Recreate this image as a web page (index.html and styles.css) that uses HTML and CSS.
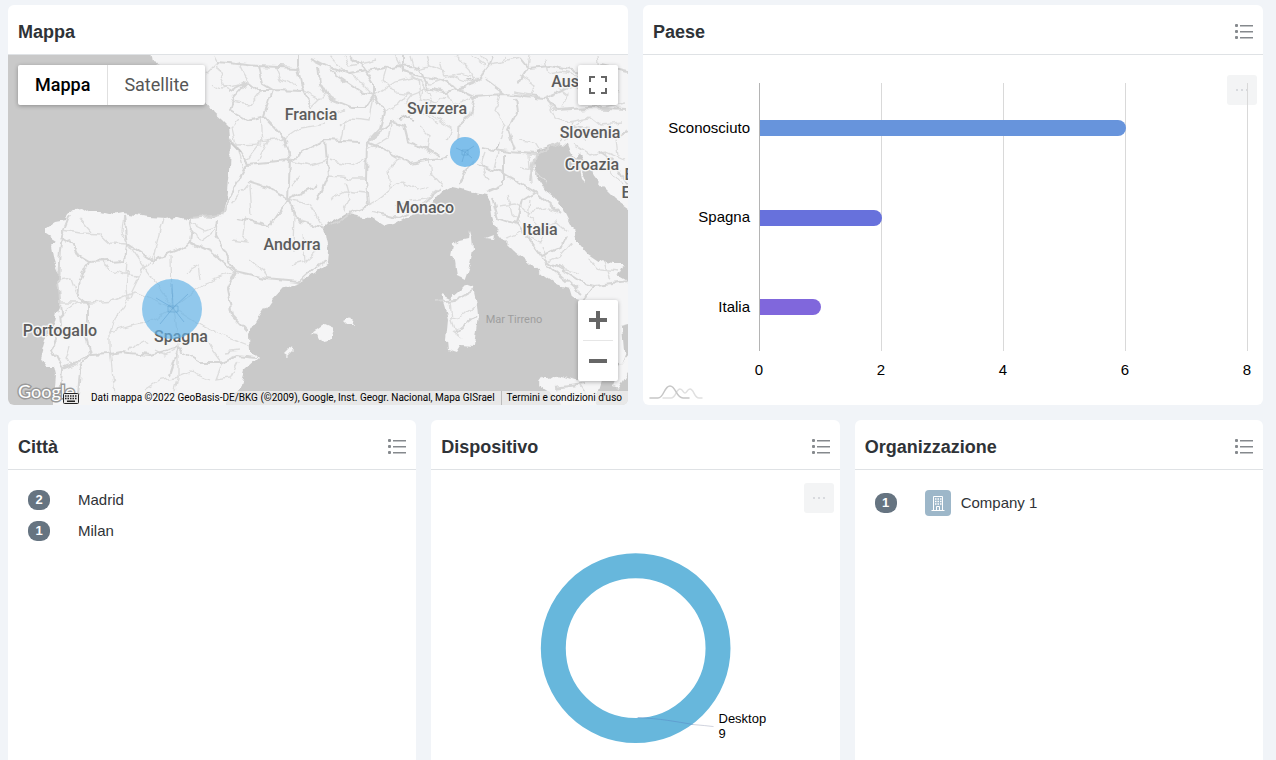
FILE: index.html
```html
<!DOCTYPE html>
<html lang="it">
<head>
    <meta charset="UTF-8">
    <meta name="viewport" content="width=device-width, initial-scale=1.0">
    <title>Dashboard</title>
    <link rel="stylesheet" href="styles.css">
</head>
<body>
    <svg class="sprite" aria-hidden="true">
        <symbol id="icon-list" viewBox="0 0 18 16">
            <g fill="#85898d">
                <rect x="0" y="0" width="3" height="3" rx="1"/>
                <rect x="0" y="6" width="3" height="3" rx="1"/>
                <rect x="0" y="12" width="3" height="3" rx="1"/>
                <rect x="5" y="1" width="13" height="1.500"/>
                <rect x="5" y="7" width="13" height="1.500"/>
                <rect x="5" y="13" width="13" height="1.500"/>
            </g>
        </symbol>
    </svg>

    <main class="dashboard">
        <div class="row row-top">
            <section class="card">
                <header class="card-header">
                    <h2>Mappa</h2>
                </header>
                <div class="card-body map">
                    <svg class="map-canvas" viewBox="8 55 620 350" preserveAspectRatio="xMidYMid slice">
                        <defs>
                            <filter id="rough" x="0" y="0" width="100%" height="100%">
                                <feTurbulence type="fractalNoise" baseFrequency="0.09" numOctaves="2" seed="4" result="noise"/>
                                <feDisplacementMap in="SourceGraphic" in2="noise" scale="8" xChannelSelector="R" yChannelSelector="G"/>
                            </filter>
                        </defs>
                        <rect x="0" y="40" width="650" height="380" fill="#c9c9c9"/>
                        <g filter="url(#rough)">
                            <!-- mainland -->
                            <path fill="#f5f5f6" d="M148 40H645V320L622 326 624 350 628 356 620 366 614 350 600 320 586 302 573 298 570 288 555 284 545 277 530 263 515 251 505 241 496 230 492 215 490 200 485 195 475 193 462 189 452 187 443 192 435 200 425 210 408 216 395 224 385 226 372 218 358 216 345 213 330 222 324 228 326 240 329 252 328 263 315 273 300 282 283 288 272 300 258 320 249 335 250 350 258 358 245 370 240 388 226 405V420H54L54 395 56 375 54 366 46 366 47 362 40 358 45 340 54 325 60 300 58 272 54 262 51 246 55 240 46 234 46 228 55 222 66 220 68 213 75 208 82 207 90 212 100 212 112 215 122 213 135 215 150 217 165 218 175 216 188 220 205 218 215 219 222 215 226 200 229 170 230 138 229 127 222 120 213 112 206 101 190 80 164 67 152 63Z"/>
                            <!-- Adriatic -->
                            <path fill="#c9c9c9" d="M535 150 545 147 558 143 568 144 571 152 575 160 580 153 586 166 592 174 602 187 614 199 645 222V292L618 276 624 264 612 264 600 262 588 254 577 241 572 228 563 210 555 198 545 190 537 177 534 163Z"/>
                            <path fill="#c9c9c9" d="M645 325 630 345 622 366 616 385 612 395 645 400Z"/>
                            <!-- islands -->
                            <g fill="#f5f5f6">
                                <path d="M470 230 472 237 473 250 470 265 465 279 457 275 455 262 451 255 453 245 460 240 469 238Z"/>
                                <path d="M442 295 450 299 458 292 465 285 473 288 477 305 478 315 476 330 474 346 462 345 457 353 448 350 447 340 449 320 446 308Z"/>
                                <path d="M311 334 325 324 334 328 331 340 322 342 318 335Z"/>
                                <path d="M343 321 349 318 354 325 347 325Z"/>
                                <path d="M284 354 289 349 293 350 287 356Z"/>
                                <path d="M486 238 494 235 493 239Z"/>
                                <path d="M540 383 545 376 550 380 558 375 574 380 602 381 598 394 592 420H568L555 396 542 388Z"/>
                                <path d="M620 366 630 354 628 372 618 388 612 386Z"/>
                                <path d="M598 178 612 190 622 196 618 198 604 188Z"/>
                                <path d="M580 165 584 174 587 182 583 178Z"/>
                            </g>
                            <!-- minor roads -->
                            <g fill="none" stroke="#dcdcdc" stroke-width="1.3">
                                <path d="M62 230 80 233 100 234 110 243 128 244M80 218 92 232M129 245 122 232 124 215M129 245 150 275 173 308 205 282 235 271M163 218 155 250 152 264M155 250 140 275 128 300 115 320 110 332 130 326 150 322 173 308M172 255 173 308 178 345 178 380 172 400M100 262 110 270 125 275 140 276M60 302 90 302 115 300 135 292 155 300 173 308 200 325 222 335 248 345M128 262 126 290 128 302"/>
                                <path d="M58 280 72 278 78 295M60 315 74 305 84 300M110 332 110 350 115 395M145 390 160 380 175 378 190 372 210 380M175 350 165 355 155 350M130 350 140 340 150 345M70 345 66 360 78 365 88 355M200 280 198 265 186 272M222 362 215 380 230 378 238 362M205 335 213 350 222 362M240 350 225 352M189 222 205 230 216 226M190 232 202 240 212 233 218 222M245 217 243 235 248 242 230 240M293 265 305 262 318 250M250 260 262 270 268 278M304 235 306 262M294 210 293 250"/>
                                <path d="M205 75 218 62 222 80 228 92M218 62 215 56M262 90 250 105 232 102M240 120 232 128 236 145 262 144 260 116M285 138 260 142 245 162M236 145 243 170M268 140 258 160M250 185 252 215M291 160 310 165 328 160M303 91 320 100M298 60 298 68M285 138 300 128 325 124M288 200 310 205 324 228M248 185 232 205M300 175 292 185M312 108 325 95M240 85 222 88 212 84"/>
                                <path d="M330 56 340 68 356 78M345 56 350 66 378 60M395 56 402 70 418 80 420 95M356 78 374 96 395 82 412 78 430 84 452 76 474 84M374 96 370 120 352 118 338 128M382 112 398 104 408 92M418 80 432 95 428 112 440 120 452 128 448 140M440 62 444 76 462 74 480 80M456 56 470 70 476 84M402 120 420 110 438 122M420 126 430 136 428 152M330 160 352 165 366 158M328 176 352 178 365 178M392 120 388 138 367 150M400 158 388 170 390 190 378 200 367 206M390 190 402 182 418 190 430 186"/>
                                <path d="M395 208 410 200 428 198 440 188M430 160 432 175 442 186M480 56 488 64 502 62 520 58M502 62 506 56M545 60 548 74 562 72 580 76M520 75 535 85 530 95 512 92M560 108 568 96 558 88 562 78M500 95 495 110 505 124 500 140M520 140 535 142 540 150M550 105 556 118 568 122 590 118M560 130 575 126 590 116 600 124 622 122M575 145 590 155 606 152 624 160M606 152 610 172 622 184M585 140 578 128M486 154 482 165 488 180M498 152 494 168M530 155 532 182M520 168 535 170 548 185M498 206 515 204 530 212 545 208 558 212M508 196 512 215 520 222"/>
                                <path d="M505 238 520 232 540 242 545 232M530 200 528 215 540 226 556 222 568 232M548 262 560 256 572 242M542 245 548 262 560 268 580 272M588 258 600 270 618 272M604 262 610 280M612 70 606 84 620 92M598 56 600 70M590 100 602 108 626 104M450 300 452 320 456 332M452 318 465 314 476 304M452 330 462 338M580 386 590 400M628 130 616 140 618 156"/>
                                <path d="M410 56 414 70 430 66 446 72M426 56 430 66M424 88 420 100 436 104 446 96M446 92 452 104 466 100 474 96M384 80 396 92 412 94 428 88M388 66 384 80M404 104 412 94M470 56 484 66M530 56 528 68M340 142 344 126M345 182 350 200 344 212M330 200 345 192 366 194M238 62 244 74 250 82M275 68 280 80 294 86M320 110 330 116 345 110"/>
                            </g>
                            <!-- motorways -->
                            <g fill="none" stroke="#d6d6d6" stroke-width="2" stroke-linejoin="round">
                                <path d="M70 214 62 234 60 250 58 280 60 300 62 325 52 350 62 370 60 395M60 236 72 244 78 256 88 262 126 260 128 244 124 215M128 244 152 260 178 250 190 242 192 228 190 219 222 216M190 242 212 252 235 271 265 278 300 281 312 270 326 262M218 220 216 236 235 271 227 290 232 315 248 332M88 262 80 280 78 296 88 304 88 320 86 336 90 354 80 370 78 395M90 355 110 354 120 352 150 355 176 348 200 362 222 362 236 356 256 358"/>
                                <path d="M62 368 78 362 90 355M178 350 170 375M222 216 228 200 243 172 248 164 290 160 288 200 270 226 256 222 238 218M248 164 240 152 230 140M248 182 268 188 288 200 300 222 326 228M288 200 318 185M291 160 285 138 264 116 272 90 303 91M285 138 264 116 248 120 230 110 234 98 248 82 228 92M218 62 258 66 262 84 272 90M248 82 258 90 272 90M258 66 298 68 303 91 312 108M298 66 298 56M291 160 310 148 325 140 360 142"/>
                                <path d="M310 58 326 66 350 74 372 70 398 66 420 68M318 66 320 84 328 98 352 108 366 108 374 96M350 56 364 68 374 84 374 96 384 112 380 128 367 142 366 180 368 205 350 213 330 226M325 140 328 176 318 200M374 96 362 92 330 70M367 142 392 122 404 126 408 142 424 148 438 156M367 142 390 152 410 164 432 160 448 158M372 212 398 218 420 206 440 190"/>
                                <path d="M402 56 402 72 420 76 440 80 456 88 474 96 505 94 545 98 572 86 600 96M420 68 428 88 445 92 474 84 488 66 492 56M474 96 470 115 460 124 458 140M505 94 484 78M480 148 508 152 536 154 560 142M515 150 508 130 516 112 514 98M478 164 505 174 535 192 560 214M474 160 466 172 458 184M504 154 504 184 486 192M535 154 530 180"/>
                                <path d="M492 196 498 218 516 224 530 240 542 256 560 248 566 236M542 258 566 272 584 284 596 286 628 282M516 224 522 200 535 192M545 262 566 280 582 294M596 286 584 300M520 58 528 68 550 66 580 72 602 66 628 72M528 68 518 84M545 98 556 110 590 108 626 110M572 122 560 140M566 140 572 128 590 130 612 140 628 132M598 150 612 160 628 186M436 302 456 300 474 290M455 332 475 316M555 388 585 384"/>
                            </g>
                            <!-- lakes -->
                            <g fill="none" stroke="#cbcbcb" stroke-width="1.6">
                                <path d="M400 120 408 117 414 119M466 79 474 82M496 150 499 143M228 140 240 152"/>
                            </g>
                        </g>
                        <g class="map-label">
                            <text x="311" y="120">Francia</text>
                            <text x="437" y="114">Svizzera</text>
                            <text x="577" y="87">Austria</text>
                            <text x="590" y="138">Slovenia</text>
                            <text x="592" y="170">Croazia</text>
                            <text x="425" y="213">Monaco</text>
                            <text x="540" y="235">Italia</text>
                            <text x="292" y="250">Andorra</text>
                            <text x="60" y="336">Portogallo</text>
                            <text x="181" y="342">Spagna</text>
                            <text x="649" y="180">Bosnia</text>
                            <text x="661" y="198">Erzegovina</text>
                        </g>
                        <text class="map-sea" x="514" y="323">Mar Tirreno</text>
                        <g fill="#62b2e8" fill-opacity="0.68">
                            <circle cx="172" cy="309" r="30"/>
                            <circle cx="465" cy="152" r="15" fill-opacity="0.8"/>
                        </g>
                        <!-- streets around the two cities -->
                        <g fill="none" stroke="#5a9ccc" stroke-opacity="0.6" stroke-width="0.8">
                            <path d="M173 308 156 298M173 308 188 294M173 308 172 284M173 308 160 324M173 308 184 322M168 306h10v6h-10z"/>
                            <path d="M465 152 456 148M465 152 474 146M465 152 462 162M465 152 472 158M462 150h6v5h-6z"/>
                        </g>
                    </svg>

                    <div class="map-type">
                        <button class="active" type="button">Mappa</button>
                        <button type="button">Satellite</button>
                    </div>
                    <button class="map-fullscreen" type="button" aria-label="Schermo intero">
                        <svg width="18" height="18" viewBox="0 0 18 18" fill="#666">
                            <path d="M0 0v6h2V2h4V0zM16 0h-4v2h4v4h2V0zM16 16h-4v2h6v-6h-2zM2 12H0v6h6v-2H2z"/>
                        </svg>
                    </button>
                    <div class="map-zoom">
                        <button type="button" aria-label="Zoom avanti">
                            <svg width="18" height="18" viewBox="0 0 18 18" fill="#666"><path d="M18 7h-7V0H7v7H0v4h7v7h4v-7h7z"/></svg>
                        </button>
                        <button type="button" aria-label="Zoom indietro">
                            <svg width="18" height="18" viewBox="0 0 18 18" fill="#666"><path d="M0 7h18v4H0z"/></svg>
                        </button>
                    </div>
                    <a class="map-logo" href="#">Google</a>
                    <div class="map-footer">
                        <button class="map-keys" type="button" aria-label="Scorciatoie da tastiera">
                            <svg width="16" height="11" viewBox="0 0 16 11">
                                <rect x="0.5" y="0.5" width="15" height="10" rx="1" fill="#e8e8e8" stroke="#222"/>
                                <path stroke="#222" stroke-width="1.5" stroke-dasharray="1.5 1" d="M2 3h12M2 5.500h12"/>
                                <path stroke="#222" stroke-width="1.5" d="M4 8.200h8"/>
                            </svg>
                        </button>
                        <span>Dati mappa ©2022 GeoBasis-DE/BKG (©2009), Google, Inst. Geogr. Nacional, Mapa GISrael</span>
                        <a href="#">Termini e condizioni d'uso</a>
                    </div>
                </div>
            </section>

            <section class="card">
                <header class="card-header">
                    <h2>Paese</h2>
                    <button class="icon-button" type="button" aria-label="Elenco"><svg width="18" height="16"><use href="#icon-list"/></svg></button>
                </header>
                <div class="card-body">
                    <button class="chart-menu" type="button" aria-label="Menu"><i></i><i></i><i></i></button>
                    <svg class="chart" viewBox="0 0 620 350">
                        <g stroke="#d9d9d9" shape-rendering="crispEdges">
                            <path stroke="#b4b4b4" d="M116.500 28V296"/>
                            <path d="M238.500 28V296M360.500 28V296M482.500 28V296M604.500 28V296"/>
                        </g>
                        <path fill="#6794dc" d="M117 65h358a8 8 0 0 1 0 16H117z"/>
                        <path fill="#6771dc" d="M117 155h114a8 8 0 0 1 0 16H117z"/>
                        <path fill="#8067dc" d="M117 244h53a8 8 0 0 1 0 16H117z"/>
                        <g class="chart-category">
                            <text x="107" y="78">Sconosciuto</text>
                            <text x="107" y="167">Spagna</text>
                            <text x="107" y="257">Italia</text>
                        </g>
                        <g class="chart-value">
                            <text x="116" y="320">0</text>
                            <text x="238" y="320">2</text>
                            <text x="360" y="320">4</text>
                            <text x="482" y="320">6</text>
                            <text x="604" y="320">8</text>
                        </g>
                    </svg>
                    <a class="chart-logo" href="#" aria-label="Grafico">
                        <svg width="54" height="14" viewBox="0 0 54 14" fill="none" stroke-width="1.500" stroke-linecap="round">
                            <path stroke="#e0e0e0" d="M14 13h8c5 0 5-9 9-9 3 0 3 4 5 4s2-4 5-4c4 0 4 9 9 9h3"/>
                            <path stroke="#c6c6c6" d="M1 13h8c6 0 6-12 12-12s6 12 13 12h6"/>
                        </svg>
                    </a>
                </div>
            </section>
        </div>

        <div class="row row-bottom">
            <section class="card">
                <header class="card-header">
                    <h2>Città</h2>
                    <button class="icon-button" type="button" aria-label="Elenco"><svg width="18" height="16"><use href="#icon-list"/></svg></button>
                </header>
                <ul class="card-body list">
                    <li><span class="count"><b>2</b></span>Madrid</li>
                    <li><span class="count"><b>1</b></span>Milan</li>
                </ul>
            </section>

            <section class="card">
                <header class="card-header">
                    <h2>Dispositivo</h2>
                    <button class="icon-button" type="button" aria-label="Elenco"><svg width="18" height="16"><use href="#icon-list"/></svg></button>
                </header>
                <div class="card-body">
                    <button class="chart-menu low" type="button" aria-label="Menu"><i></i><i></i><i></i></button>
                    <svg class="chart" viewBox="0 0 409 350">
                        <circle cx="205" cy="178.500" r="82.500" fill="none" stroke="#67b7dc" stroke-width="25"/>
                        <path fill="none" stroke="#5a8fc8" d="M207 248C230 249 245 252 263 255" stroke-width="0.600"/>
                        <path fill="none" stroke="#b0b6c8" d="M263 255 274 256 283 257" stroke-width="0.600"/>
                        <g class="chart-slice">
                            <text x="288" y="253">Desktop</text>
                            <text x="288" y="268">9</text>
                        </g>
                    </svg>
                </div>
            </section>

            <section class="card">
                <header class="card-header">
                    <h2>Organizzazione</h2>
                    <button class="icon-button" type="button" aria-label="Elenco"><svg width="18" height="16"><use href="#icon-list"/></svg></button>
                </header>
                <ul class="card-body list">
                    <li>
                        <span class="count"><b>1</b></span>
                        <span class="company-icon">
                            <svg width="14" height="16" viewBox="0 0 14 16" fill="none" stroke="#fff">
                                <path d="M2.500 15V1.500h9V15M0.500 15.500h13M5.500 15v-3.500h3V15"/>
                                <path stroke-width="1.500" stroke-dasharray="1.500 1" d="M4 4h7M4 6.500h7M4 9h7"/>
                            </svg>
                        </span>
                        Company 1
                    </li>
                </ul>
            </section>
        </div>
    </main>
</body>
</html>
```
FILE: styles.css
```css
* {
    box-sizing: border-box;
}

html {
    scrollbar-width: none;
}

body {
    margin: 0;
    font-family: "Liberation Sans", Arial, sans-serif;
    font-size: 15px;
    color: #2f3337;
    background: #f1f4f8;
}

button {
    padding: 0;
    border: none;
    background: none;
    cursor: pointer;
}

.sprite {
    position: absolute;
    width: 0;
    height: 0;
}

.dashboard {
    display: flex;
    flex-direction: column;
    gap: 15px;
    padding: 5px 13px 15px 8px;
}

.row {
    display: grid;
    gap: 15px;
}

.row-top {
    grid-template-columns: repeat(2, 1fr);
}

.row-bottom {
    grid-template-columns: repeat(3, 1fr);
}

.card {
    background: #fff;
    border-radius: 6px;
    overflow: hidden;
}

.card-header {
    display: flex;
    align-items: center;
    justify-content: space-between;
    height: 50px;
    padding: 4px 10px 0;
    border-bottom: 1px solid #dfe2e5;
}

.card-header h2 {
    margin: 0;
    font-size: 18px;
    line-height: 24px;
}

.icon-button svg, .map svg, .chart, .chart-logo svg, .company-icon svg {
    display: block;
}

.card-body {
    position: relative;
    min-height: 350px;
}

/* Map */

.map {
    overflow: hidden;
    font-family: Roboto, sans-serif;
}

.map-canvas {
    width: 100%;
    height: 350px;
}

.map-label {
    font-size: 16px;
    font-weight: 500;
    fill: #5c5c5c;
    stroke: #f5f5f5;
    stroke-width: 3px;
    stroke-linejoin: round;
    paint-order: stroke;
    text-anchor: middle;
}

.map-sea {
    font-size: 11px;
    fill: #9e9e9e;
    text-anchor: middle;
}

.map-type, .map-fullscreen, .map-zoom {
    position: absolute;
    background: #fff;
    border-radius: 2px;
    box-shadow: 0 1px 4px rgba(0, 0, 0, 0.3);
}

.map-type {
    top: 10px;
    left: 10px;
    display: flex;
}

.map-type button {
    height: 40px;
    padding: 0 16px 2px;
    font-family: inherit;
    font-size: 18px;
    color: #565656;
}

.map-type button + button {
    border-left: 1px solid #e0e0e0;
}

.map-type .active {
    padding-left: 17px;
    padding-right: 17px;
    font-weight: 500;
    color: #000;
}

.map-fullscreen, .map-zoom button {
    display: flex;
    align-items: center;
    justify-content: center;
    width: 40px;
    height: 40px;
}

.map-fullscreen {
    top: 10px;
    right: 10px;
}

.map-zoom {
    right: 10px;
    bottom: 24px;
}

.map-zoom button + button {
    height: 41px;
    background: linear-gradient(#e6e6e6, #e6e6e6) center top / 30px 1px no-repeat;
}

.map-logo {
    position: absolute;
    left: 10px;
    bottom: 2px;
    font-family: Lato, sans-serif;
    font-size: 18px;
    line-height: 24px;
    color: #fff;
    text-decoration: none;
    -webkit-text-stroke: 3px #9a9a9a;
    paint-order: stroke fill;
}

.map-footer {
    position: absolute;
    right: 0;
    bottom: 0;
    display: flex;
    height: 14px;
    font-size: 10px;
    line-height: 14px;
    color: #000;
    white-space: nowrap;
}

.map-footer span, .map-footer a {
    padding: 0 6px;
    background: rgba(245, 245, 245, 0.7);
}

.map-footer span {
    padding-left: 10px;
}

.map-footer a {
    padding-left: 5px;
    border-left: 1px solid #bbb;
    color: #000;
    text-decoration: none;
}

.map-keys {
    padding: 0 2px;
}

/* Charts */

.chart {
    position: relative;
    width: 100%;
    pointer-events: none;
}

.chart text {
    fill: #000;
    font-size: 15px;
}

.chart-category {
    text-anchor: end;
}

.chart-value {
    text-anchor: middle;
}

.chart .chart-slice text {
    font-size: 13px;
}

.chart-menu {
    position: absolute;
    top: 20px;
    right: 6px;
    display: flex;
    align-items: center;
    justify-content: center;
    gap: 3px;
    width: 30px;
    height: 30px;
    border-radius: 3px;
    background: #f3f4f5;
}

.chart-menu.low {
    top: 13px;
}

.chart-menu i {
    width: 2px;
    height: 2px;
    border-radius: 50%;
    background: #cfd2d6;
}

.chart-logo {
    position: absolute;
    left: 6px;
    bottom: 6px;
}

/* Lists */

.list {
    margin: 0;
    padding: 14px 20px;
    list-style: none;
}

.list li {
    display: flex;
    align-items: center;
    padding: 6px 0 5px;
    line-height: 18px;
}

.count {
    width: 50px;
}

.count b {
    display: block;
    width: 22px;
    border-radius: 9px;
    background: #667481;
    color: #fff;
    font-size: 13px;
    line-height: 20px;
    text-align: center;
}

.company-icon {
    display: flex;
    align-items: center;
    justify-content: center;
    width: 26px;
    height: 26px;
    margin-right: 10px;
    border-radius: 4px;
    background: #9db7c9;
}
```
